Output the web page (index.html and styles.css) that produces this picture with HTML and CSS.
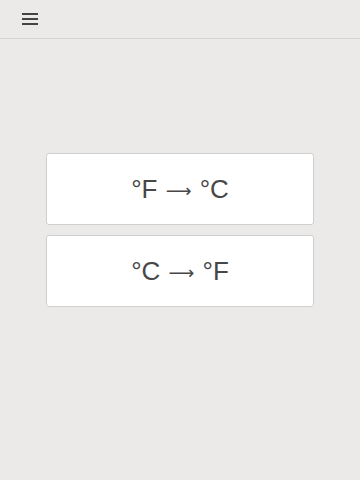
FILE: index.html
```html
<!DOCTYPE html>
<html>
<head>
<meta charset="utf-8">
<link rel="stylesheet" href="styles.css">
</head>
<body>
<header class="topbar">
  <button class="menu-btn" aria-label="Menu">
    <svg width="16" height="12" viewBox="0 0 16 12"><path d="M0 1h16M0 6h16M0 11h16" stroke="#444" stroke-width="2" fill="none"/></svg>
  </button>
</header>
<main class="content">
  <div class="card"><span class="label">°F <span class="arrow">⟶</span> °C</span></div>
  <div class="card"><span class="label">°C <span class="arrow">⟶</span> °F</span></div>
</main>
</body>
</html>
```
FILE: styles.css
```css
html, body { margin: 0; padding: 0; }
body {
  background: #ebeae8;
  font-family: "Liberation Sans", Arial, sans-serif;
  width: 360px;
  height: 480px;
  overflow: hidden;
}
.topbar {
  height: 38px;
  border-bottom: 1px solid #d6d5d3;
  display: flex;
  align-items: center;
  padding-left: 22px;
}
.menu-btn {
  background: none;
  border: 0;
  padding: 0;
  display: flex;
}
.content {
  display: flex;
  flex-direction: column;
  align-items: center;
  gap: 10px;
  padding-top: 114px;
}
.card {
  box-sizing: border-box;
  width: 268px;
  height: 72px;
  background: #fff;
  border: 1px solid #cfcfcf;
  border-radius: 3px;
  display: flex;
  align-items: center;
  justify-content: center;
  font-size: 26px;
  color: #474747;
}
.label {
  white-space: nowrap;
}
.arrow {
  font-family: "DejaVu Sans", sans-serif;
  font-size: 18px;
  margin: 0 1px;
  position: relative;
  top: -1px;
}
```
